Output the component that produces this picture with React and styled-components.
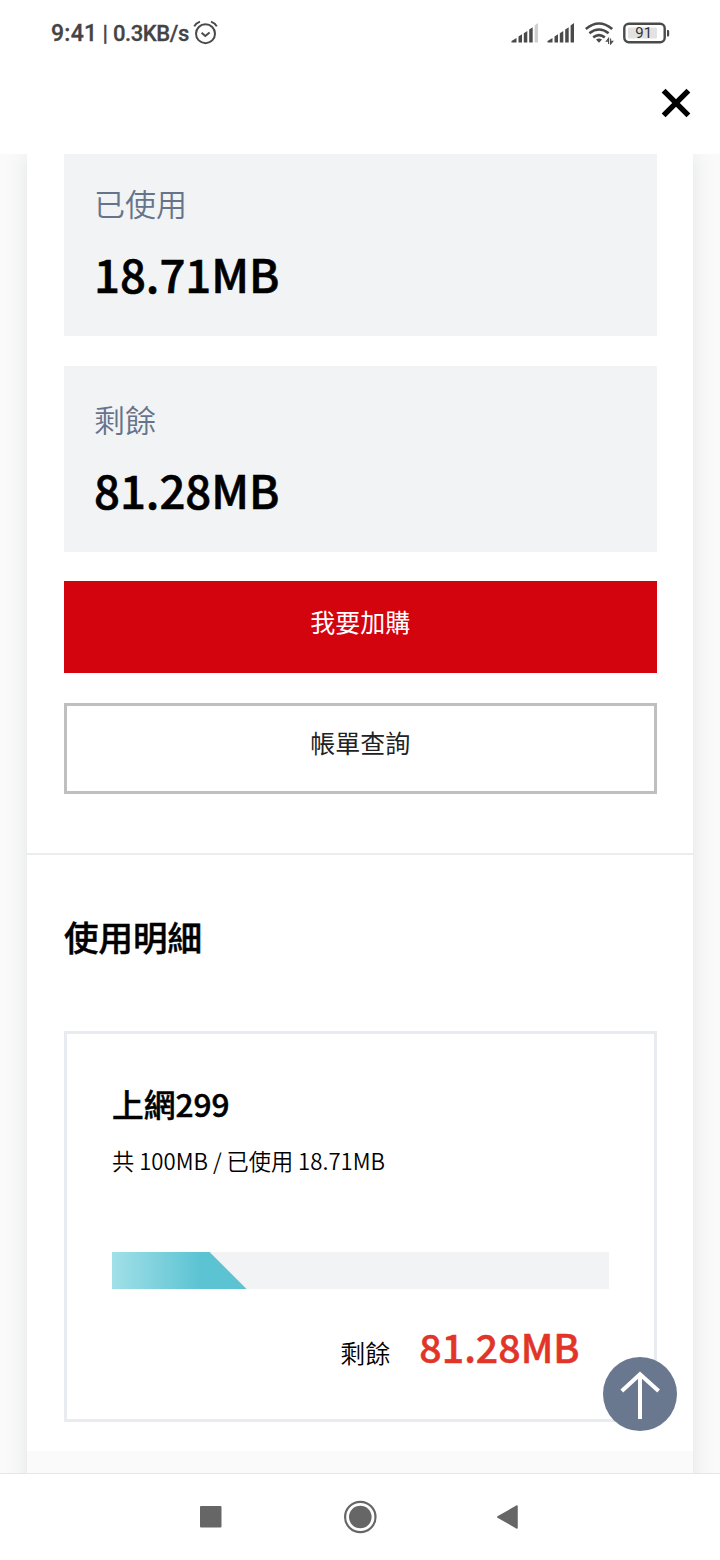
import styled, { createGlobalStyle } from 'styled-components'

const GlobalStyle = createGlobalStyle`
   * {
      box-sizing: border-box;
   }

   body {
      margin: 0;
      background-color: #fff;
      color: #000;
      font-family: 'Noto Sans CJK TC', sans-serif;
   }
`
const Screen = styled.div`
   display: flex;
   flex-direction: column;
   height: 1560px;
   overflow: hidden;
   position: relative;
   width: 720px;
`
const StatusBar = styled.div`
   align-items: center;
   color: #444;
   display: flex;
   flex-shrink: 0;
   font-family: Roboto, sans-serif;
   height: 66px;
   justify-content: space-between;
   padding: 0 50px 0 51px;
`
const StatusGroup = styled.div`
   align-items: center;
   display: flex;
`
const Clock = styled.span`
   -webkit-text-stroke: 0.3px #444;
   font-size: ${({ $size }) => $size || '22px'};
   font-weight: 500;
   letter-spacing: ${({ $spacing }) => $spacing || '0px'};
   line-height: 30px;
   margin-right: ${({ $gap }) => $gap || '0px'};
   padding-top: 2px;
   white-space: pre;
`
const Header = styled.header`
   display: flex;
   flex-shrink: 0;
   height: 88px;
   justify-content: flex-end;
   padding: 22px 29px 0 0;
`
const CloseButton = styled.button`
   background: none;
   border: none;
   display: block;
   height: 30px;
   padding: 0;
   width: 30px;
`
const Page = styled.main`
   background-color: #fafafa;
   flex: 1;
   overflow: hidden;
   padding: 0 27px;
`
const Shade = styled.div`
   box-shadow: 0 0 22px rgba(100, 125, 115, 0.16);
   background-color: #fafafa;
   height: 1400px;
`
const Sheet = styled.div`
   background-color: #fff;
   height: 1297px;
`
const Section = styled.section`
   display: flex;
   flex-direction: column;
   padding: 0 36.5px 0 37px;
`
const Stat = styled.div`
   background-color: #f1f3f5;
   height: ${({ $height }) => $height};
   margin-bottom: ${({ $gap }) => $gap};
   padding: ${({ $top }) => $top} 30px 0;
`
const StatLabel = styled.p`
   color: #65748b;
   font-size: 31px;
   font-weight: 350;
   line-height: 44px;
   margin: 0;
`
const StatValue = styled.p`
   -webkit-text-stroke: 0.6px #000;
   font-size: 45.5px;
   font-weight: 500;
   line-height: 66px;
   margin: 15px 0 0;
`
const Button = styled.button`
   background-color: ${({ $primary }) => ($primary ? '#d4040e' : '#fff')};
   border: ${({ $primary }) => ($primary ? 'none' : '3px solid #bfbfbf')};
   color: ${({ $primary }) => ($primary ? '#fff' : '#222')};
   font-family: inherit;
   font-size: 25px;
   font-weight: 400;
   height: ${({ $primary }) => ($primary ? '92px' : '91px')};
   line-height: 36px;
   margin-bottom: 30px;
   padding: 0 0 13px;
   width: 100%;
`
const Divider = styled.hr`
   background-color: #ebeef0;
   border: none;
   height: 2px;
   margin: 29px 0 0;
`
const Title = styled.h2`
   -webkit-text-stroke: 0.5px #000;
   font-size: 34.5px;
   font-weight: 500;
   line-height: 50px;
   margin: 56px 0 70px;
`
const Plan = styled.article`
   border: 3px solid #e8ebef;
   height: 391px;
   padding: 45px 45px 0;
`
const PlanName = styled.h3`
   -webkit-text-stroke: 0.5px #000;
   font-size: 31.7px;
   font-weight: 500;
   line-height: 48px;
   margin: 0;
`
const PlanInfo = styled.p`
   font-size: 22.2px;
   font-weight: 350;
   line-height: 32px;
   margin: 17px 0 0;
`
const Track = styled.div`
   background-color: #f1f3f5;
   height: 37px;
   margin-top: 76px;
`
const Fill = styled.div`
   background: linear-gradient(90deg, #a1e0e8, #5cc3d2 66%);
   clip-path: polygon(0 0, calc(100% - 37px) 0, 100% 100%, 0 100%);
   height: 100%;
`
const Remaining = styled.div`
   align-items: baseline;
   display: flex;
   gap: 29px;
   justify-content: flex-end;
   margin-top: 28px;
   padding-right: 29px;
`
const RemainingLabel = styled.span`
   font-size: 25px;
   font-weight: 350;
`
const RemainingValue = styled.strong`
   -webkit-text-stroke: 0.5px #e13529;
   color: #e13529;
   font-size: 39.3px;
   font-weight: 500;
   line-height: 58px;
`
const TopButton = styled.button`
   background-color: #6a788f;
   border: none;
   border-radius: 50%;
   height: 74px;
   left: 603px;
   padding: 0;
   position: absolute;
   top: 1357px;
   width: 74px;
`
const NavBar = styled.nav`
   align-items: center;
   background-color: #fff;
   border-top: 1px solid #e6e6e6;
   display: flex;
   flex-shrink: 0;
   height: 87px;
   justify-content: space-between;
   padding: 0 197px;
`
const Icon = styled.svg`
   display: block;
   flex-shrink: 0;
   margin-left: ${({ $left }) => $left || '0px'};
`

function Signal({ weak, left }) {
    return (
        <Icon $left={left} width="28" height="22" viewBox="0 0 28 22" fill="#4a4a4a">
            <path d="M0.5 20.5V19L5.5 16V20.5Z" />
            <path d="M7.5 20.5V14.5L11 12.3V20.5Z" />
            <path d="M12.8 20.5V11.2L16.3 9V20.5Z" />
            <path d="M18.2 20.5V7.5L21.7 5.3V20.5Z" />
            <path d="M23.6 20.5V3.5L27 1V20.5Z" fill={weak ? '#cfcfcf' : '#4a4a4a'} />
        </Icon>
    )
}

function AlarmIcon() {
    return (
        <Icon $left="4px" width="25" height="26" viewBox="0 0 25 26" fill="none" stroke="#4a4a4a" strokeWidth="2">
            <circle cx="12.5" cy="13.7" r="9.5" />
            <path d="M8.6 12.8L12.3 16L16.6 12.5" />
            <path d="M1.2 6.4Q3 3 7 1.6M23.8 6.4Q22 3 18 1.6" />
        </Icon>
    )
}

function WifiIcon() {
    return (
        <Icon $left="10px" width="29" height="24" viewBox="0 0 29 24" fill="none" stroke="#4a4a4a" strokeWidth="2.6">
            <path d="M0.8 8Q14 -3 27.2 8" />
            <path d="M4.4 12.2Q14 4.8 23.6 12.2" />
            <path d="M8.2 16.4Q14 12 19.8 16.4" />
            <path d="M11 18.6Q14 16.4 17 18.6L14 21.8Z" fill="#4a4a4a" stroke="none" />
            <path d="M23.6 23V17.4L21.4 20.2H23.6M25.6 17.4V23L27.8 20.2H25.6" strokeWidth="1.1" />
        </Icon>
    )
}

function BatteryIcon({ level }) {
    return (
        <Icon $left="9px" width="47" height="22" viewBox="0 0 47 22">
            <rect x="1.3" y="1.8" width="40.4" height="18.4" rx="4.5" fill="none" stroke="#4a4a4a" strokeWidth="2.4" />
            <rect x="5" y="5.5" width="29" height="11" rx="1" fill="#e2e2e2" />
            <path d="M44 8H45A1.2 1.2 0 0 1 46.2 9.2V13.2A1.2 1.2 0 0 1 45 14.4H44Z" fill="#4a4a4a" />
            <text x="20.7" y="16.2" textAnchor="middle" fontFamily="Roboto, sans-serif" fontSize="15" fontWeight="400" fill="#333">{level}</text>
        </Icon>
    )
}

function App() {
    const usedPercent = 27.1

    return (
        <Screen>
            <GlobalStyle />
            <StatusBar>
                <StatusGroup>
                    <Clock $size="23px" $gap="5px" $spacing="0.3px">9:41</Clock>
                    <Clock $gap="5px">|</Clock>
                    <Clock $spacing="-0.4px">0.3KB/s</Clock>
                    <AlarmIcon />
                </StatusGroup>
                <StatusGroup>
                    <Signal weak />
                    <Signal left="8px" />
                    <WifiIcon />
                    <BatteryIcon level="91" />
                </StatusGroup>
            </StatusBar>
            <Header>
                <CloseButton aria-label="關閉">
                    <Icon width="30" height="30" viewBox="0 0 30 30" stroke="#000" strokeWidth="5.5">
                        <path d="M2.6 2.6L27.4 27.4M27.4 2.6L2.6 27.4" />
                    </Icon>
                </CloseButton>
            </Header>
            <Page>
                <Shade>
                    <Sheet>
                        <Section>
                            <Stat $height="182px" $top="27px" $gap="30px">
                                <StatLabel>已使用</StatLabel>
                                <StatValue>18.71MB</StatValue>
                            </Stat>
                            <Stat $height="186px" $top="31px" $gap="29px">
                                <StatLabel>剩餘</StatLabel>
                                <StatValue>81.28MB</StatValue>
                            </Stat>
                            <Button $primary>我要加購</Button>
                            <Button>帳單查詢</Button>
                        </Section>
                        <Divider />
                        <Section>
                            <Title>使用明細</Title>
                            <Plan>
                                <PlanName>上網299</PlanName>
                                <PlanInfo>共 100MB / 已使用 18.71MB</PlanInfo>
                                <Track>
                                    <Fill style={{ width: `${usedPercent}%` }} />
                                </Track>
                                <Remaining>
                                    <RemainingLabel>剩餘</RemainingLabel>
                                    <RemainingValue>81.28MB</RemainingValue>
                                </Remaining>
                            </Plan>
                        </Section>
                    </Sheet>
                </Shade>
            </Page>
            <TopButton aria-label="回到頂端">
                <Icon width="74" height="74" viewBox="0 0 74 74" fill="none" stroke="#fff" strokeWidth="4">
                    <path d="M37 62V17M18.8 34L37 17.2L55.6 34" />
                </Icon>
            </TopButton>
            <NavBar>
                <Icon width="26" height="22" viewBox="0 0 26 22">
                    <rect x="3" y="0" width="21.5" height="21.5" rx="1" fill="#666" />
                </Icon>
                <Icon width="34" height="34" viewBox="0 0 34 34">
                    <circle cx="17.3" cy="17" r="15.2" fill="none" stroke="#666" strokeWidth="2.2" />
                    <circle cx="17.3" cy="17" r="11.3" fill="#666" />
                </Icon>
                <Icon width="26" height="26" viewBox="0 0 26 26">
                    <path d="M0.8 13L20 2V24Z" fill="#666" stroke="#666" strokeWidth="1.5" strokeLinejoin="round" />
                </Icon>
            </NavBar>
        </Screen>
    )
}

export default App
